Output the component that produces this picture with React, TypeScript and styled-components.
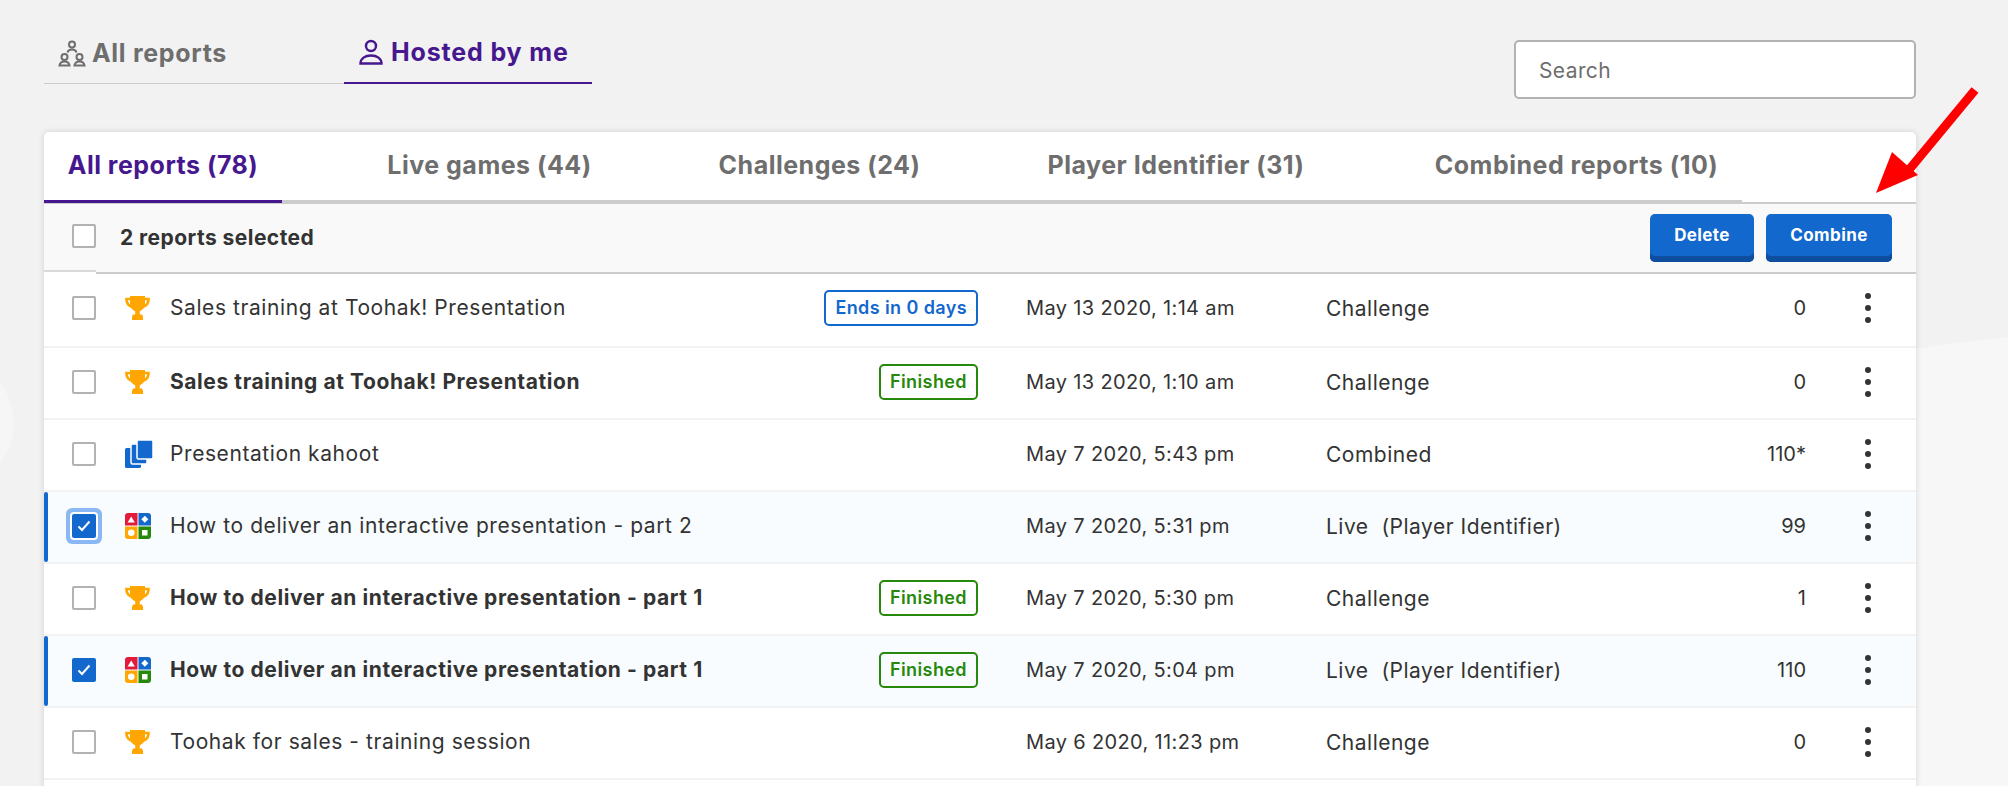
import styled, { createGlobalStyle } from "styled-components";

const GlobalStyle = createGlobalStyle`
  html, body {
    margin: 0;
    padding: 0;
    background: #f2f2f2;
  }
  body {
    font-family: Inter, "Open Sans", "Liberation Sans", sans-serif;
    color: #333;
  }
`;

type Report = {
  title: string;
  bold?: boolean;
  kind: "trophy" | "combined" | "live";
  badge?: "ends" | "finished";
  date: string;
  type: string;
  count: string;
  checked?: boolean;
  focused?: boolean;
};

const REPORTS: Report[] = [
  { title: "Sales training at Toohak! Presentation", kind: "trophy", badge: "ends", date: "May 13 2020, 1:14 am", type: "Challenge", count: "0" },
  { title: "Sales training at Toohak! Presentation", bold: true, kind: "trophy", badge: "finished", date: "May 13 2020, 1:10 am", type: "Challenge", count: "0" },
  { title: "Presentation kahoot", kind: "combined", date: "May 7 2020, 5:43 pm", type: "Combined", count: "110*" },
  { title: "How to deliver an interactive presentation - part 2", kind: "live", date: "May 7 2020, 5:31 pm", type: "Live  (Player Identifier)", count: "99", checked: true, focused: true },
  { title: "How to deliver an interactive presentation - part 1", bold: true, kind: "trophy", badge: "finished", date: "May 7 2020, 5:30 pm", type: "Challenge", count: "1" },
  { title: "How to deliver an interactive presentation - part 1", bold: true, kind: "live", badge: "finished", date: "May 7 2020, 5:04 pm", type: "Live  (Player Identifier)", count: "110", checked: true },
  { title: "Toohak for sales - training session", kind: "trophy", date: "May 6 2020, 11:23 pm", type: "Challenge", count: "0" },
];

const TABS = [
  { label: "All reports (78)", width: 238, active: true },
  { label: "Live games (44)", width: 251 },
  { label: "Challenges (24)", width: 245 },
  { label: "Player Identifier (31)", width: 304 },
  { label: "Combined reports (10)", width: 333 },
];

const TrophyIcon = () => (
  <svg width="25" height="24" viewBox="0 0 25 24">
    <path d="M6 3H1.500c0 4 1.800 6.800 5.500 7.800M19 3h4.500c0 4-1.800 6.800-5.500 7.800" fill="none" stroke="#ffa602" strokeWidth="2.700" />
    <path d="M5 0h15v7.500c0 4.300-2.800 7-5.200 7.700V19h-4.600v-3.800C7.800 14.500 5 11.800 5 7.500z" fill="#ffa602" />
    <path d="M8 18.500h9l1 2V24H7v-3.500z" fill="#ffa602" />
  </svg>
);

const CombinedIcon = () => (
  <svg width="28" height="28" viewBox="0 0 28 28">
    <rect x="0" y="8" width="16" height="20" rx="1.500" fill="#1368ce" />
    <rect x="6" y="4" width="16" height="20" rx="1.500" fill="#1368ce" stroke="#fff" strokeWidth="1.500" />
    <rect x="12" y="0" width="16" height="19" rx="1.500" fill="#1368ce" stroke="#fff" strokeWidth="1.500" />
  </svg>
);

const LiveIcon = () => (
  <svg width="26" height="26" viewBox="0 0 26 26">
    <path d="M3 0h9.500v12.500H0V3a3 3 0 0 1 3-3z" fill="#e21b3c" />
    <path d="M13.500 0H23a3 3 0 0 1 3 3v9.500H13.500z" fill="#1368ce" />
    <path d="M0 13.500h12.500V26H3a3 3 0 0 1-3-3z" fill="#ffa602" />
    <path d="M13.500 13.500H26V23a3 3 0 0 1-3 3h-9.500z" fill="#26890c" />
    <path d="M6.200 3.500l3.600 6H2.600z" fill="#fff" />
    <path d="M19.800 2.800l3.500 3.500-3.500 3.500-3.500-3.500z" fill="#fff" />
    <circle cx="6.200" cy="19.700" r="3.300" fill="#fff" />
    <rect x="17" y="17" width="5.500" height="5.500" fill="#fff" />
  </svg>
);

const GroupIcon = () => (
  <svg width="28" height="28" viewBox="0 0 28 28" fill="none" stroke="#6e6e6e" strokeWidth="2">
    <circle cx="14" cy="5.500" r="3" />
    <path d="M9.500 13.500c.5-2 2.200-3 4.500-3s4 1 4.500 3" />
    <circle cx="6.500" cy="18" r="3" />
    <path d="M1.500 26.500c.4-2.500 2.300-4 5-4s4.600 1.500 5 4z" />
    <circle cx="21.500" cy="18" r="3" />
    <path d="M16.500 26.500c.4-2.500 2.300-4 5-4s4.600 1.500 5 4z" />
  </svg>
);

const PersonIcon = () => (
  <svg width="24" height="26" viewBox="0 0 24 26" fill="none" stroke="#46178f" strokeWidth="2.400">
    <circle cx="12" cy="7" r="5" />
    <path d="M1.500 24.500c0-5 4.500-8 10.500-8s10.500 3 10.500 8z" />
  </svg>
);

const CheckMark = () => (
  <svg width="14" height="12" viewBox="0 0 14 12" fill="none" stroke="#fff" strokeWidth="2">
    <path d="M1.500 6.500l3.500 3.500 7.500-8.500" />
  </svg>
);

const KIND_ICONS = { trophy: TrophyIcon, combined: CombinedIcon, live: LiveIcon };

export default function App() {
  return (
    <Page>
      <GlobalStyle />
      <LeftBlob />
      <RightBlob />
      <Header>
        <TopTabs>
          <TopTab $width={300} $gap={6}>
            <GroupIcon />
            All reports
          </TopTab>
          <TopTab $width={248} $gap={8} $active>
            <PersonIcon />
            Hosted by me
          </TopTab>
        </TopTabs>
        <SearchInput placeholder="Search" readOnly />
      </Header>

      <Card>
        <TabBar>
          <TabList>
            {TABS.map((tab) => (
              <Tab key={tab.label} $width={tab.width} $active={tab.active}>
                {tab.label}
              </Tab>
            ))}
          </TabList>
        </TabBar>

        <Toolbar>
          <ToolbarLeft>
            <CheckBox />
          </ToolbarLeft>
          <SelectedLabel>2 reports selected</SelectedLabel>
          <BlueButton $width={104}>Delete</BlueButton>
          <BlueButton $width={126}>Combine</BlueButton>
        </Toolbar>

        {REPORTS.map((r, i) => {
          const Icon = KIND_ICONS[r.kind];
          return (
            <Row key={i} $selected={r.checked}>
              <CheckBox $checked={r.checked} $focused={r.focused}>
                {r.checked && <CheckMark />}
              </CheckBox>
              <IconCell>
                <Icon />
              </IconCell>
              <TitleCell>
                <Title $bold={r.bold}>{r.title}</Title>
                {r.badge === "ends" && <Badge $color="#1368ce">Ends in 0 days</Badge>}
                {r.badge === "finished" && <Badge $color="#26890c">Finished</Badge>}
              </TitleCell>
              <DateCell>{r.date}</DateCell>
              <TypeCell>{r.type}</TypeCell>
              <CountCell>{r.count}</CountCell>
              <MoreCell>
                <Dot />
                <Dot />
                <Dot />
              </MoreCell>
            </Row>
          );
        })}
      </Card>

      <Arrow width="120" height="120" viewBox="0 0 120 120">
        <path d="M111 6L44 87" stroke="#ff0000" strokeWidth="9" fill="none" />
        <path d="M12 109L28 68 54 91z" fill="#ff0000" />
      </Arrow>
    </Page>
  );
}

/* =================================================== */
const Page = styled.div`
  position: relative;
  width: 2008px;
  height: 786px;
  box-sizing: border-box;
  padding: 24px 92px 0 44px;
  overflow: hidden;
  background: #f2f2f2;
`;

const LeftBlob = styled.div`
  position: absolute;
  left: -180px;
  top: 345px;
  width: 194px;
  height: 156px;
  border-radius: 50%;
  background: #f6f6f6;
`;

const RightBlob = styled.div`
  position: absolute;
  left: 1082px;
  top: 335px;
  width: 2000px;
  height: 2000px;
  border-radius: 50%;
  background: #f7f7f7;
`;

const Header = styled.div`
  position: relative;
  display: flex;
  justify-content: space-between;
  align-items: flex-start;
  height: 75px;
`;

const TopTabs = styled.div`
  display: flex;
`;

const TopTab = styled.div<{ $width: number; $gap: number; $active?: boolean }>`
  display: flex;
  align-items: center;
  gap: ${(p) => p.$gap}px;
  box-sizing: border-box;
  width: ${(p) => p.$width}px;
  height: 60px;
  padding: 0 0 2px ${(p) => (p.$active ? 15 : 14)}px;
  border-bottom: ${(p) => (p.$active ? "2px solid #46178f" : "1px solid #ccc")};
  font-size: 25px;
  font-weight: 700;
  letter-spacing: ${(p) => (p.$active ? 0.85 : 0.7)}px;
  white-space: nowrap;
  color: ${(p) => (p.$active ? "#46178f" : "#6e6e6e")};
`;

const SearchInput = styled.input`
  box-sizing: border-box;
  width: 402px;
  height: 59px;
  margin-top: 16px;
  padding: 2px 23px 0;
  border: 2px solid #b2b2b2;
  border-radius: 5px;
  background: #fff;
  font-family: inherit;
  font-size: 21px;
  letter-spacing: 0.4px;
  outline: none;
  &::placeholder {
    color: #6e6e6e;
  }
`;

const Card = styled.div`
  position: relative;
  margin-top: 33px;
  height: 700px;
  border-radius: 5px 5px 0 0;
  background: #fff;
  box-shadow: 0 0 6px rgba(0, 0, 0, 0.14);
`;

const TabBar = styled.div`
  height: 72px;
  box-sizing: border-box;
  border-bottom: 2px solid #ccc;
`;

const TabList = styled.div`
  display: flex;
  gap: 82px;
  box-sizing: border-box;
  width: 1698px;
  height: 71px;
  border-bottom: 3px solid #ccc;
`;

const Tab = styled.div<{ $width: number; $active?: boolean }>`
  display: flex;
  align-items: center;
  justify-content: center;
  box-sizing: border-box;
  flex: none;
  width: ${(p) => p.$width}px;
  height: 71px;
  padding-bottom: 2px;
  border-bottom: 3px solid ${(p) => (p.$active ? "#46178f" : "transparent")};
  font-size: 25px;
  font-weight: 700;
  letter-spacing: 0.5px;
  white-space: nowrap;
  color: ${(p) => (p.$active ? "#46178f" : "#6e6e6e")};
`;

const Toolbar = styled.div`
  display: flex;
  align-items: center;
  gap: 12px;
  height: 70px;
  box-sizing: border-box;
  padding: 0 24px 0 0;
  background: #f9f9f9;
  border-bottom: 2px solid #ccc;
`;

const ToolbarLeft = styled.div`
  position: relative;
  display: flex;
  align-items: center;
  box-sizing: border-box;
  width: 52px;
  height: 68px;
  padding: 0 0 2px 28px;
  margin-right: 12px;
  border-bottom: 2px solid #d9d9d9;
  &::after {
    content: "";
    position: absolute;
    left: 0;
    right: 0;
    bottom: -4px;
    height: 2px;
    background: #fff;
  }
`;

const SelectedLabel = styled.div`
  flex: 1;
  padding-bottom: 2px;
  font-size: 21px;
  font-weight: 700;
  letter-spacing: 0.45px;
  color: #333;
`;

const BlueButton = styled.div<{ $width: number }>`
  display: flex;
  align-items: center;
  justify-content: center;
  box-sizing: border-box;
  width: ${(p) => p.$width}px;
  height: 48px;
  padding-bottom: 6px;
  border-radius: 5px;
  background: #1368ce;
  box-shadow: inset 0 -6px 0 #0f4e9e;
  color: #fff;
  font-size: 17px;
  font-weight: 700;
  letter-spacing: 0.4px;
`;

const Row = styled.div<{ $selected?: boolean }>`
  position: relative;
  display: grid;
  grid-template-columns: 53px 45px 808px 48px 300px 300px 180px 110px;
  align-items: center;
  box-sizing: border-box;
  height: 72px;
  padding: 0 0 2px 28px;
  border-bottom: 2px solid #f2f2f2;
  background: ${(p) => (p.$selected ? "#f8fcff" : "#fff")};
  &:nth-child(3) {
    height: 74px;
    padding-bottom: 4px;
  }
  ${(p) =>
    p.$selected &&
    `&::before {
      content: "";
      position: absolute;
      left: 0;
      top: 0;
      bottom: 0;
      width: 4px;
      border-radius: 4px;
      background: #1368ce;
    }`}
`;

const CheckBox = styled.div<{ $checked?: boolean; $focused?: boolean }>`
  display: flex;
  align-items: center;
  justify-content: center;
  box-sizing: border-box;
  width: 24px;
  height: 24px;
  border: 2px solid ${(p) => (p.$checked ? "#1368ce" : "#b2b2b2")};
  border-radius: 2px;
  background: ${(p) => (p.$checked ? "#1368ce" : "#fff")};
  box-shadow: ${(p) => (p.$focused ? "0 0 0 2px #fff, 0 0 0 6px #8ab8f5" : "none")};
`;

const IconCell = styled.div`
  display: flex;
  align-items: center;
  height: 28px;
`;

const TitleCell = styled.div`
  grid-column: 3;
  display: flex;
  align-items: center;
  justify-content: space-between;
`;

const Title = styled.div<{ $bold?: boolean }>`
  font-size: 21px;
  line-height: 28px;
  font-weight: ${(p) => (p.$bold ? 700 : 400)};
  letter-spacing: 0.58px;
  white-space: nowrap;
  color: #333;
`;

const Badge = styled.div<{ $color: string }>`
  box-sizing: border-box;
  height: 36px;
  padding: 0 9px;
  border: 2px solid ${(p) => p.$color};
  border-radius: 5px;
  color: ${(p) => p.$color};
  font-size: 18px;
  line-height: 32px;
  font-weight: 600;
  letter-spacing: 0.4px;
  white-space: nowrap;
`;

const DateCell = styled.div`
  grid-column: 5;
  font-size: 20px;
  letter-spacing: 0.35px;
  white-space: nowrap;
`;

const TypeCell = styled.div`
  font-size: 21px;
  letter-spacing: 0.5px;
  white-space: pre;
`;

const CountCell = styled.div`
  font-size: 20px;
  text-align: right;
`;

const MoreCell = styled.div`
  display: flex;
  flex-direction: column;
  gap: 6px;
  padding-left: 59px;
`;

const Dot = styled.span`
  width: 6px;
  height: 6px;
  border-radius: 50%;
  background: #333;
`;

const Arrow = styled.svg`
  position: absolute;
  left: 1864px;
  top: 84px;
`;
